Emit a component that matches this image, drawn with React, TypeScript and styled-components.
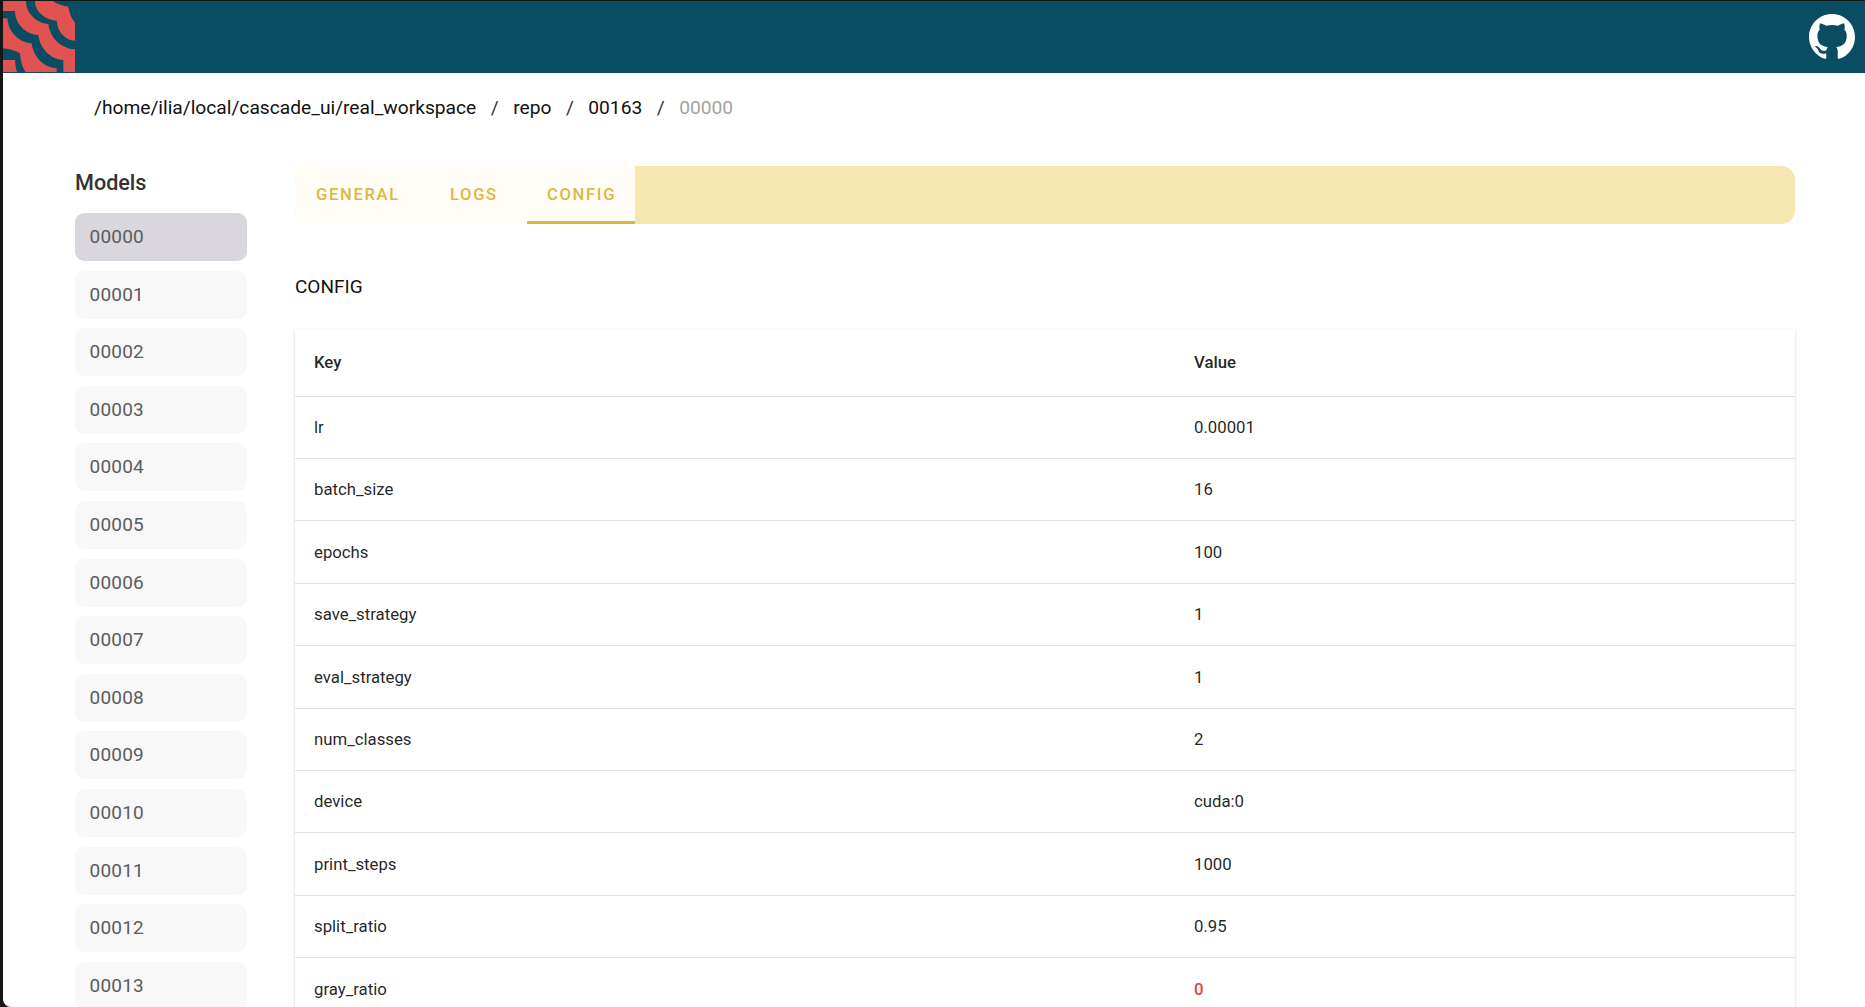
import React from "react";
import styled, { createGlobalStyle } from "styled-components";

const Global = createGlobalStyle`
  html, body { margin: 0; padding: 0; height: 100%; overflow: hidden; background: #161616; }
  #root { height: 100%; }
  * { box-sizing: border-box; }
`;

const Frame = styled.div`
  height: 100vh;
  overflow: hidden;
  padding: 1px 0 0 3px;
  background: #161616;
  font-family: Roboto, "Liberation Sans", sans-serif;
`;

const Page = styled.div`
  height: 100%;
  overflow: hidden;
  background: #fff;
  border-bottom-left-radius: 8px;
  display: flex;
  flex-direction: column;
`;

const AppBar = styled.header`
  flex: none;
  height: 72px;
  background: #0a4d63;
  display: flex;
  align-items: center;
  justify-content: space-between;
  padding-right: 10px;
`;

const LogoMark = styled.svg`
  display: block;
  width: 72px;
  height: 71px;
  align-self: flex-start;
`;

const GitHubMark = styled.svg`
  display: block;
  width: 46px;
  height: 46px;
  fill: #fff;
`;

const Crumbs = styled.nav`
  flex: none;
  height: 93px;
  padding: 23px 0 0 91px;
  display: flex;
  align-items: flex-start;
  font-size: 19.2px;
  line-height: 24px;
  color: #111;
`;

const Crumb = styled.span<{ $current?: boolean }>`
  color: ${(p) => (p.$current ? "#a3a3a3" : "#111")};
`;

const Sep = styled.span`
  margin: 0 14.5px;
  color: #333;
`;

const Body = styled.div`
  flex: 1;
  min-height: 0;
  display: flex;
  padding-left: 72px;
`;

const Sidebar = styled.aside`
  flex: none;
  width: 172px;
  margin-right: 48px;
`;

const SideTitle = styled.h2`
  margin: 0 0 7px;
  height: 40px;
  padding-top: 3px;
  font-size: 21.6px;
  line-height: 28px;
  font-weight: 500;
  color: #333;
`;

const ModelItem = styled.div<{ $selected?: boolean }>`
  height: 48px;
  margin-bottom: 9.6px;
  padding: 0 0 1px 14.5px;
  display: flex;
  align-items: center;
  border-radius: 9.5px;
  background: ${(p) => (p.$selected ? "#d9d6dd" : "#f8f8f8")};
  color: #5c5c5c;
  font-size: 19px;
  letter-spacing: 0.2px;
`;

const Main = styled.main`
  width: 1500px;
  flex: none;
`;

const TabBar = styled.div`
  height: 58px;
  display: flex;
  background: #f6e6b0;
  border-radius: 14px;
  overflow: hidden;
`;

const Tab = styled.div<{ $active?: boolean; $w: number; $pad: number }>`
  width: ${(p) => p.$w}px;
  padding: 2px 0 0 ${(p) => p.$pad}px;
  display: flex;
  align-items: center;
  background: #fffdf6;
  color: #e0b643;
  font-size: 16.6px;
  font-weight: 500;
  letter-spacing: 1.65px;
  border-bottom: 3px solid ${(p) => (p.$active ? "#e0b643" : "transparent")};
`;

const SectionTitle = styled.h3`
  margin: 49px 0 28px;
  font-size: 19px;
  line-height: 28px;
  font-weight: 400;
  color: #111;
`;

const Table = styled.div`
  background: #fff;
  box-shadow: 0 2px 1px -1px rgba(0, 0, 0, 0.2), 0 1px 1px rgba(0, 0, 0, 0.14), 0 1px 3px rgba(0, 0, 0, 0.12);
`;

const Row = styled.div<{ $head?: boolean }>`
  height: ${(p) => (p.$head ? "67.6px" : "62.4px")};
  padding: 0 0 0.4px 19px;
  display: grid;
  grid-template-columns: 880px 1fr;
  align-items: center;
  border-bottom: 1.2px solid #e0e0e0;
  font-size: 16.75px;
  font-weight: ${(p) => (p.$head ? 500 : 400)};
  color: rgba(0, 0, 0, 0.87);
`;

const Flagged = styled.span`
  color: #e04444;
  font-weight: 500;
`;

const models = Array.from({ length: 14 }, (_, i) => String(i).padStart(5, "0"));

const config: [string, string][] = [
  ["lr", "0.00001"],
  ["batch_size", "16"],
  ["epochs", "100"],
  ["save_strategy", "1"],
  ["eval_strategy", "1"],
  ["num_classes", "2"],
  ["device", "cuda:0"],
  ["print_steps", "1000"],
  ["split_ratio", "0.95"],
  ["gray_ratio", "0"],
];

export default function App() {
  return (
    <Frame>
      <Global />
      <Page>
        <AppBar>
          <LogoMark viewBox="0 0 216 213" preserveAspectRatio="none">
            <rect width="216" height="213" fill="#e05350" />
            <g fill="#0a4d63">
              <path d="M149 0C165 10 180 15 196 17C198 35 206 52 216 65L216 0Z" />
              <path d="M69 0L96 0C96 32 126 57 161 59C163 92 186 117 216 119L216 145C176 143 141 112 136 69C101 67 69 37 69 0Z" />
              <path d="M0 30L36 30C36 67 66 100 106 102C111 142 141 175 181 177L181 213L161 213L161 202C121 200 91 167 86 127C46 125 16 92 13 52L0 52Z" />
              <path d="M0 142C20 144 40 150 51 157C53 180 58 200 68 213L42 213C38 200 37 190 36 177L0 177Z" />
            </g>
          </LogoMark>
          <GitHubMark viewBox="0 0 16 16">
            <path d="M8 0C3.58 0 0 3.58 0 8c0 3.54 2.29 6.53 5.47 7.59.4.07.55-.17.55-.38 0-.19-.01-.82-.01-1.49-2.01.37-2.53-.49-2.69-.94-.09-.23-.48-.94-.82-1.13-.28-.15-.68-.52-.01-.53.63-.01 1.08.58 1.23.82.72 1.21 1.87.87 2.33.66.07-.52.28-.87.51-1.07-1.78-.2-3.64-.89-3.64-3.95 0-.87.31-1.59.82-2.15-.08-.2-.36-1.02.08-2.12 0 0 .67-.21 2.2.82.64-.18 1.32-.27 2-.27s1.36.09 2 .27c1.53-1.04 2.2-.82 2.2-.82.44 1.1.16 1.92.08 2.12.51.56.82 1.27.82 2.15 0 3.07-1.87 3.75-3.65 3.95.29.25.54.73.54 1.48 0 1.07-.01 1.93-.01 2.2 0 .21.15.46.55.38A8.01 8.01 0 0 0 16 8c0-4.42-3.58-8-8-8z" />
          </GitHubMark>
        </AppBar>
        <Crumbs>
          <Crumb>/home/ilia/local/cascade_ui/real_workspace</Crumb>
          <Sep>/</Sep>
          <Crumb>repo</Crumb>
          <Sep>/</Sep>
          <Crumb>00163</Crumb>
          <Sep>/</Sep>
          <Crumb $current>00000</Crumb>
        </Crumbs>
        <Body>
          <Sidebar>
            <SideTitle>Models</SideTitle>
            {models.map((m, i) => (
              <ModelItem key={m} $selected={i === 0}>
                {m}
              </ModelItem>
            ))}
          </Sidebar>
          <Main>
            <TabBar>
              <Tab $w={134} $pad={21}>GENERAL</Tab>
              <Tab $w={98} $pad={21}>LOGS</Tab>
              <Tab $w={108} $pad={20} $active>
                CONFIG
              </Tab>
            </TabBar>
            <SectionTitle>CONFIG</SectionTitle>
            <Table>
              <Row $head>
                <span>Key</span>
                <span>Value</span>
              </Row>
              {config.map(([k, v]) => (
                <Row key={k}>
                  <span>{k}</span>
                  {k === "gray_ratio" ? <Flagged>{v}</Flagged> : <span>{v}</span>}
                </Row>
              ))}
            </Table>
          </Main>
        </Body>
      </Page>
    </Frame>
  );
}
